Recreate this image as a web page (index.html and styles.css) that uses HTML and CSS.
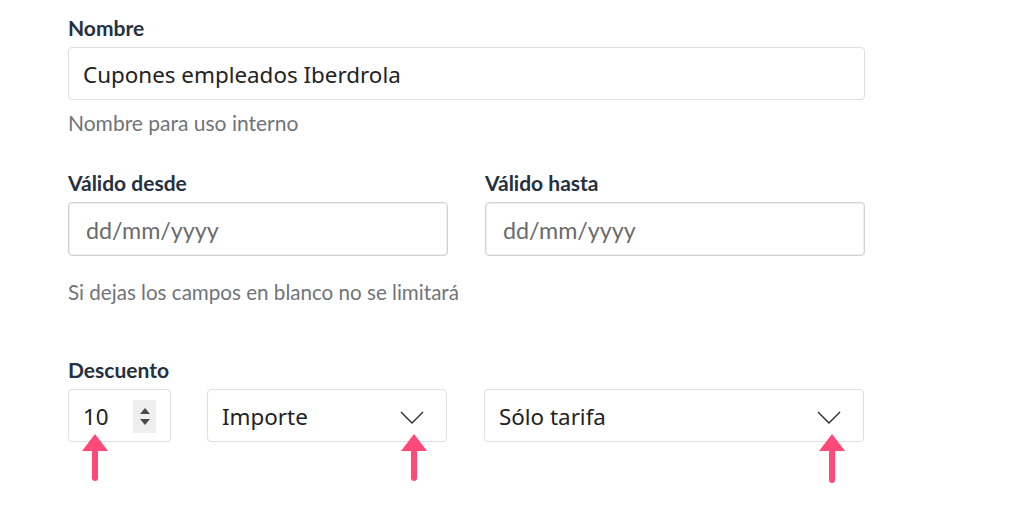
FILE: index.html
```html
<!DOCTYPE html>
<html lang="es">
<head>
<meta charset="utf-8">
<title>Cupón</title>
<link rel="stylesheet" href="styles.css">
</head>
<body>
<form class="form">
  <div class="group">
    <label class="label">Nombre</label>
    <div class="input input-name"><span class="value">Cupones empleados Iberdrola</span></div>
    <p class="help help-name">Nombre para uso interno</p>
  </div>

  <div class="row dates">
    <div class="col">
      <label class="label">Válido desde</label>
      <div class="input date"><span class="placeholder">dd/mm/yyyy</span></div>
    </div>
    <div class="col">
      <label class="label">Válido hasta</label>
      <div class="input date"><span class="placeholder">dd/mm/yyyy</span></div>
    </div>
  </div>
  <p class="help help-dates">Si dejas los campos en blanco no se limitará</p>

  <div class="group discount">
    <label class="label">Descuento</label>
    <div class="row discount-row">
      <div class="input number">
        <span class="value">10</span>
        <span class="spinner"><span class="up"></span><span class="down"></span></span>
        <span class="pin pin-number"></span>
      </div>
      <div class="input select select-type">
        <span class="value">Importe</span>
        <svg class="chevron" width="24" height="13" viewBox="0 0 24 13"><path d="M1 1 L12 12 L23 1" fill="none" stroke="#2b2b2b" stroke-width="1.4"/></svg>
        <span class="pin pin-select"></span>
      </div>
      <div class="input select select-scope">
        <span class="value">Sólo tarifa</span>
        <svg class="chevron" width="24" height="13" viewBox="0 0 24 13"><path d="M1 1 L12 12 L23 1" fill="none" stroke="#2b2b2b" stroke-width="1.4"/></svg>
        <span class="pin pin-select pin-scope"></span>
      </div>
    </div>
  </div>
</form>
</body>
</html>
```
FILE: styles.css
```css
* { box-sizing: border-box; }
html, body { margin: 0; background: #fff; }
body {
  font-family: Lato, "Liberation Sans", sans-serif;
  color: #212529;
  min-height: 517px;
}
.form {
  width: 797px;
  margin-left: 68px;
  padding-top: 17px;
  padding-bottom: 60px;
}
.label {
  display: block;
  font-size: 21px;
  line-height: 22px;
  font-weight: 700;
  color: #253040;
  margin-bottom: 8px;
}
.input {
  position: relative;
  display: flex;
  align-items: center;
  height: 53px;
  border: 1px solid #dcdfe3;
  border-radius: 4px;
  background: #fff;
  padding-left: 14px;
}
.value {
  font-family: "Noto Sans", "Open Sans", sans-serif;
  font-size: 22.4px;
  color: #222;
  margin-top: 2px;
}
.placeholder {
  font-family: Lato, sans-serif;
  font-size: 23.3px;
  color: #6b6b6b;
  padding-left: 3px;
  margin-top: 2px;
}
.help {
  margin: 0;
  font-size: 21px;
  line-height: 22px;
  color: #707478;
}
.help-name { margin-top: 12px; }
.help-dates { margin-top: 25px; font-size: 20.6px; }
.row { display: flex; }
.dates { margin-top: 38px; gap: 37px; }
.dates .col { width: 380px; }
.date {
  margin-top: 1px;
  height: 54px;
  border: 1px solid #d2d2d2;
  box-shadow: inset 0 0 0 1px #efefef;
}
.discount { margin-top: 56px; }
.discount-row { gap: 36px; }
.number { width: 103px; }
.spinner {
  position: absolute;
  left: 64px;
  top: 10px;
  width: 23px;
  height: 33px;
  background: #efefef;
  display: flex;
  flex-direction: column;
  align-items: center;
  justify-content: center;
  gap: 5px;
}
.up, .down {
  width: 0; height: 0;
  border-left: 5px solid transparent;
  border-right: 5px solid transparent;
}
.up { border-bottom: 6px solid #4a4a4a; }
.down { border-top: 6px solid #4a4a4a; }
.select { justify-content: space-between; padding-right: 22px; }
.select-type { width: 240px; }
.select-scope { width: 380px; margin-left: 1px; }
.chevron { display: block; margin-top: 4px; }
.pin {
  position: absolute;
  top: 44px;
  width: 26px;
  height: 47px;
}
.pin::before {
  content: "";
  position: absolute;
  left: 0; top: 0;
  border-left: 13px solid transparent;
  border-right: 13px solid transparent;
  border-bottom: 17px solid #ff4a78;
}
.pin::after {
  content: "";
  position: absolute;
  left: 10px; top: 15px;
  width: 6px; height: 32px;
  border-radius: 3px;
  background: #ff4a78;
}
.pin-number { left: 13px; }
.pin-select { right: 19px; }
.pin-scope { right: 18px; height: 49px; }
.pin-scope::after { height: 34px; }
```
